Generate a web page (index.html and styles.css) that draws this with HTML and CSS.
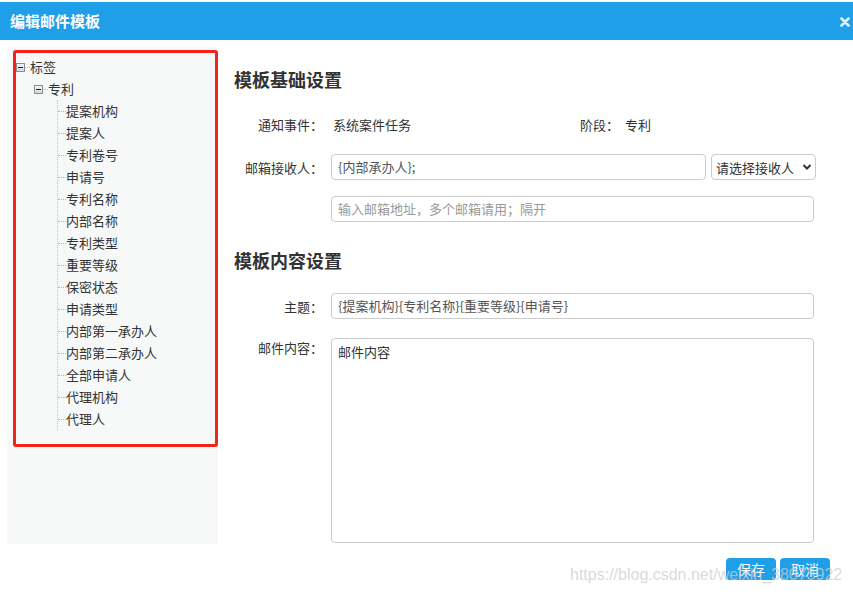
FILE: index.html
```html
<!DOCTYPE html>
<html lang="zh-CN">
<head>
<meta charset="utf-8">
<title>编辑邮件模板</title>
<link rel="stylesheet" href="styles.css">
</head>
<body>
<div class="dialog">
  <div class="titlebar">
    <span class="title">编辑邮件模板</span>
    <svg class="close" width="10" height="10" viewBox="0 0 10 10"><path d="M1.5 1.5 L8.5 8.5 M8.5 1.5 L1.5 8.5" stroke="#e8f4fc" stroke-width="2.6" stroke-linecap="round"/></svg>
  </div>
  <div class="content">
    <aside class="sidebar">
      <div class="tree">
        <div class="node root">
          <span class="toggle"></span><span class="hdot"></span><span class="label">标签</span>
        </div>
        <div class="node branch">
          <span class="toggle"></span><span class="hdot"></span><span class="label">专利</span>
        </div>
        <ul class="leaves">
          <li><span class="hdot leafdot"></span>提案机构</li>
          <li><span class="hdot leafdot"></span>提案人</li>
          <li><span class="hdot leafdot"></span>专利卷号</li>
          <li><span class="hdot leafdot"></span>申请号</li>
          <li><span class="hdot leafdot"></span>专利名称</li>
          <li><span class="hdot leafdot"></span>内部名称</li>
          <li><span class="hdot leafdot"></span>专利类型</li>
          <li><span class="hdot leafdot"></span>重要等级</li>
          <li><span class="hdot leafdot"></span>保密状态</li>
          <li><span class="hdot leafdot"></span>申请类型</li>
          <li><span class="hdot leafdot"></span>内部第一承办人</li>
          <li><span class="hdot leafdot"></span>内部第二承办人</li>
          <li><span class="hdot leafdot"></span>全部申请人</li>
          <li><span class="hdot leafdot"></span>代理机构</li>
          <li><span class="hdot leafdot"></span>代理人</li>
        </ul>
      </div>
    </aside>
    <main class="main">
      <h2 class="section first">模板基础设置</h2>
      <div class="info-row">
        <span class="label-col">通知事件：</span>
        <span class="info-value">系统案件任务</span>
        <span class="stage">阶段：<span class="stage-value">专利</span></span>
      </div>
      <div class="form-row r-receiver">
        <span class="label-col">邮箱接收人：</span>
        <div class="input w-receiver">{内部承办人};</div>
        <div class="select">
          <span>请选择接收人</span>
          <svg width="10" height="8" viewBox="0 0 10 8"><path d="M1.5 2 L5 5.5 L8.5 2" fill="none" stroke="#333" stroke-width="2"/></svg>
        </div>
      </div>
      <div class="form-row r-email">
        <span class="label-col"></span>
        <div class="input w-full placeholder">输入邮箱地址，多个邮箱请用；隔开</div>
      </div>
      <h2 class="section second">模板内容设置</h2>
      <div class="form-row r-subject">
        <span class="label-col">主题：</span>
        <div class="input w-full">{提案机构}{专利名称}{重要等级}{申请号}</div>
      </div>
      <div class="form-row r-body">
        <span class="label-col top">邮件内容：</span>
        <div class="textarea">邮件内容</div>
      </div>
      <div class="actions">
        <button class="btn">保存</button>
        <button class="btn">取消</button>
      </div>
    </main>
  </div>
  <div class="watermark">https://blog.csdn.net/weixin_38073922</div>
</div>
</body>
</html>
```

FILE: styles.css
```css
* { box-sizing: border-box; }
html, body {
  margin: 0;
  padding: 0;
  background: #fff;
}
body {
  font-family: "Microsoft YaHei", "Noto Sans CJK SC", "Noto Sans", sans-serif;
  font-size: 13px;
  color: #333;
  width: 853px;
  height: 594px;
  overflow: hidden;
}
.dialog {
  position: relative;
  width: 853px;
  height: 594px;
  padding-top: 2px;
}
.titlebar {
  height: 38px;
  background: #1e9fe8;
  display: flex;
  align-items: center;
  justify-content: space-between;
  padding: 0 3px 0 10px;
}
.title {
  color: #fff;
  font-weight: bold;
  font-size: 15px;
  line-height: 20px;
}
.close { display: block; margin-top: 2px; }

.content {
  display: flex;
  align-items: flex-start;
}
.sidebar {
  margin-left: 7px;
  margin-top: 7px;
  width: 211px;
  height: 497px;
  background: #f7f9f9;
  padding: 3px 0 0 6px;
}
.tree {
  width: 205px;
  height: 397px;
  border: 3px solid #f2231a;
  border-radius: 3px;
  padding-top: 3px;
}
.node {
  display: flex;
  align-items: center;
  height: 22px;
}
.root { padding-left: 0; }
.branch { padding-left: 18px; }
.toggle {
  width: 9px;
  height: 9px;
  border: 1px solid #8a8f94;
  background: linear-gradient(#f4f4f4, #d6d9dc);
  position: relative;
  flex: none;
}
.toggle::after {
  content: "";
  position: absolute;
  left: 1px;
  top: 3px;
  width: 5px;
  height: 1px;
  background: #222;
}
.hdot {
  width: 5px;
  height: 0;
  border-top: 1px dotted #b8b8b8;
  flex: none;
}
.label { line-height: 22px; }
.leaves {
  list-style: none;
  margin: 0 0 0 41px;
  padding: 0;
  border-left: 1px dotted #c4c4c4;
  width: 140px;
}
.leaves li {
  display: flex;
  align-items: center;
  height: 22px;
  line-height: 22px;
  white-space: nowrap;
}
.leafdot { width: 8px; }

.main {
  margin-left: 16px;
  width: 596px;
}
.section {
  margin: 0;
  font-size: 18px;
  line-height: 24px;
  font-weight: bold;
  color: #333;
}
.section.first { margin-top: 27px; }
.section.second { margin-top: 26px; }
.label-col {
  width: 89px;
  flex: none;
  text-align: right;
  margin-right: 8px;
  color: #333;
}
.label-col.top { align-self: flex-start; line-height: 20px; }
.info-row {
  display: flex;
  align-items: center;
  margin-top: 24px;
  line-height: 20px;
}
.info-value { width: 247px; margin-left: 2px; }
.stage-value { margin-left: 6px; }
.form-row {
  display: flex;
  align-items: center;
}
.r-receiver { margin-top: 19px; }
.r-email { margin-top: 16px; }
.r-subject { margin-top: 21px; }
.r-body { margin-top: 19px; align-items: flex-start; }
.input {
  height: 26px;
  border: 1px solid #ccc;
  border-radius: 4px;
  padding: 0 6px;
  line-height: 24px;
  color: #555;
  background: #fff;
  white-space: nowrap;
  overflow: hidden;
}
.w-receiver { width: 375px; }
.w-full { width: 483px; }
.placeholder { color: #999; }
.select {
  margin-left: 5px;
  width: 105px;
  height: 26px;
  border: 1px solid #ccc;
  border-radius: 4px;
  display: flex;
  align-items: center;
  justify-content: space-between;
  padding: 0 3px 0 4px;
  color: #333;
  background: #fff;
  white-space: nowrap;
}
.select svg { flex: none; }
.textarea {
  width: 483px;
  height: 205px;
  border: 1px solid #ccc;
  border-radius: 4px;
  padding: 3px 6px;
  line-height: 20px;
  color: #333;
  background: #fff;
}
.actions {
  display: flex;
  justify-content: flex-end;
  gap: 4px;
  margin-top: 15px;
  width: 596px;
}
.btn {
  width: 50px;
  height: 22px;
  border: none;
  border-radius: 4px;
  background: #1e9fe8;
  color: #fff;
  font-family: inherit;
  font-size: 14px;
  line-height: 22px;
  padding: 0;
}
.watermark {
  position: absolute;
  left: 570px;
  top: 564px;
  font-family: "Liberation Sans", Arial, sans-serif;
  font-size: 16px;
  line-height: 22px;
  color: rgba(205, 205, 205, 0.75);
  white-space: nowrap;
  pointer-events: none;
}
```
